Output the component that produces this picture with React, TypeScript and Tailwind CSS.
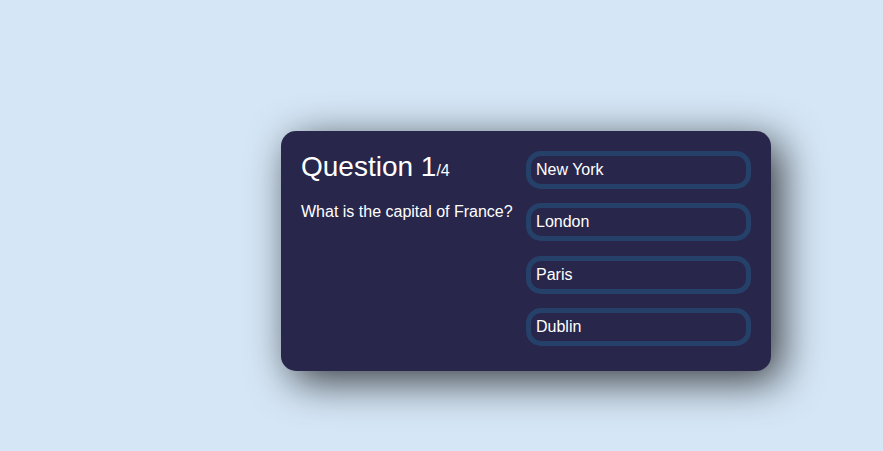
const answers = ['New York', 'London', 'Paris', 'Dublin'];

export default function App() {
  return (
    <div className="min-h-[451px] bg-[#d5e6f6] pl-[281px] pt-[131px] font-['Liberation_Sans',Arial,sans-serif] text-[16px] leading-[normal] text-white">
      <div className="flex w-[490px] min-h-[240px] justify-evenly rounded-[15px] bg-[#28264b] p-5 shadow-[10px_10px_42px_0px_rgba(0,0,0,0.75)]">
        <div className="w-[225px]">
          <div className="mb-5">
            <span className="text-[28px]">Question 1</span>/4
          </div>
          <div className="mb-3">What is the capital of France?</div>
        </div>
        <div className="flex w-[225px] flex-col gap-[14.33px]">
          {answers.map((a) => (
            <button
              key={a}
              className="flex h-[38px] w-full items-center justify-start rounded-[15px] border-[5px] border-[#254169] bg-[#28264b] p-[5px] text-white"
            >
              {a}
            </button>
          ))}
        </div>
      </div>
    </div>
  );
}
